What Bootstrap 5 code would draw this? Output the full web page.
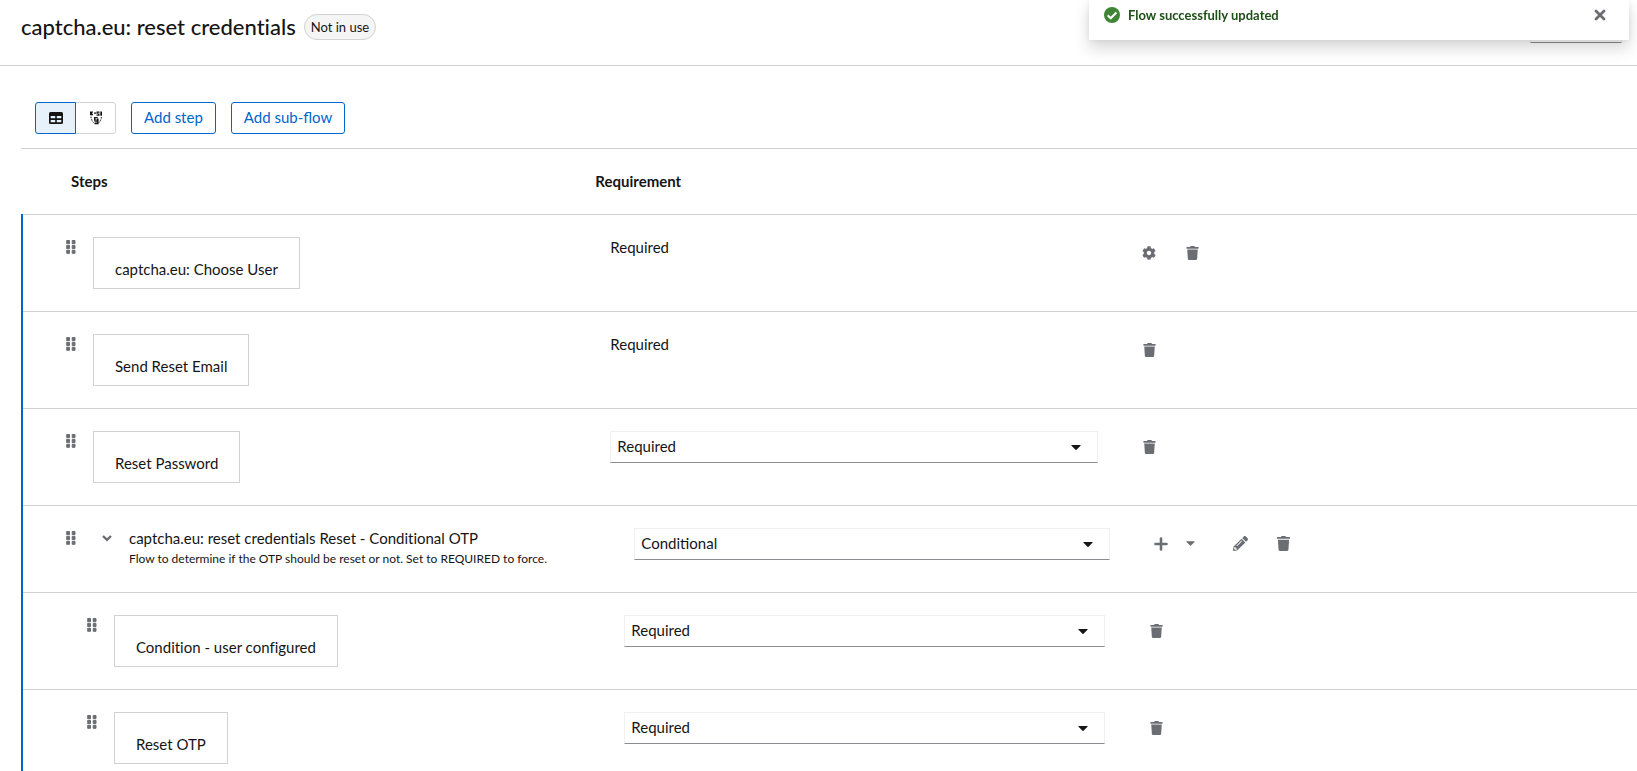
<!DOCTYPE html>
<html lang="en">
<head>
<meta charset="utf-8">
<meta name="viewport" content="width=device-width, initial-scale=1">
<title>Authentication flow</title>
<link href="https://cdn.jsdelivr.net/npm/bootstrap@5.3.0/dist/css/bootstrap.min.css" rel="stylesheet">
<style>
  :root { --ink: #151515; --muted: #6a6e73; --line: #d2d2d2; --blue: #06c; }
  body { font: 400 15px/22px Lato, "Open Sans", sans-serif; font-variant-ligatures: none; color: var(--ink); background: #fff; overflow-x: hidden; }
  svg { display: block; fill: currentColor; }

  .page-head { height: 66px; padding: 0 15px 12px 21px; border-bottom: 1px solid var(--line); }
  .page-head h1 { font-size: 22px; line-height: 28px; font-weight: 500; }
  .flow-label { font-size: 13px; line-height: 24px; border: 1px solid var(--line); background: #f5f5f5; padding: 0 6px; border-radius: 13px; }
  .action-toggle { width: 92px; height: 32px; border: 1px solid #f0f0f0; border-bottom-color: #8a8d90; background-color: #fff; padding: 0 6px; }

  .flow-toast { position: fixed; top: 0; right: 8px; width: 540px; max-width: 100%; z-index: 10; background: #fff; padding: 4px 22px 14px 15px;
    box-shadow: 0 8px 16px rgba(3,3,3,.16), 0 0 6px rgba(3,3,3,.08); }
  .flow-toast p { font-size: 13px; font-weight: 700; color: #1e4f18; }
  .plain { border: 0; background: none; padding: 0; color: var(--muted); display: flex; align-items: center; justify-content: center; }

  .flow-tools { margin-left: 21px; padding: 36px 14px 14px; border-bottom: 1px solid var(--line); gap: 15px; }
  .view-toggle .btn, .btn-flow { height: 32px; border-radius: 3px; font-size: 15px; line-height: 22px; }
  .view-toggle .btn { width: 41px; padding: 0; display: flex; align-items: center; justify-content: center; border-color: var(--line); color: var(--ink); }
  .view-toggle .btn:first-child { border-color: var(--blue); background: #e7f1fa; z-index: 1; }
  .btn-flow { border-color: var(--blue); color: var(--blue); padding: 0 12px 2px; }

  .flow-grid { display: grid; grid-template-columns: repeat(3, minmax(0, 1fr)); column-gap: 30px; flex: 1 1 0; min-width: 0; }
  .flow-head { margin-left: 21px; padding: 21px 23px 22px 50px; font-weight: 700; }
  .flow-list { margin: 0 0 0 21px; padding: 0; list-style: none; border-left: 2px solid var(--blue); }
  .flow-row { display: flex; border-top: 1px solid var(--line); padding: 22px 22px 22px 43px; }
  .flow-row.nested { padding-left: 64px; }
  .drag { width: 27px; height: 20px; justify-content: flex-start; flex: none; }
  .fold { width: 36px; height: 20px; flex: none; }
  .fold svg { margin-right: 8px; }
  .step-box { border: 1px solid var(--line); padding: 20px 21px 8px; width: fit-content; max-width: 100%; }
  .step-text { line-height: 20px; }
  .step-note { font-size: 12px; line-height: 22px; }
  .need { appearance: none; width: 100%; height: 32px; border: 1px solid #f0f0f0; border-bottom-color: #8a8d90; border-radius: 0; padding: 0 36px 2px 6px; color: var(--ink);
    background: #fff url("data:image/svg+xml,%3Csvg xmlns='http://www.w3.org/2000/svg' viewBox='0 0 10 5'%3E%3Cpath d='M.8 0h8.4q.8.2.3.8L5.5 4.7q-.5.5-1 0L.5.8Q0 .2.8 0' fill='%23151515'/%3E%3C/svg%3E") no-repeat right 16px center / 10px 5px; }
  .tool { width: 43px; height: 31px; }
  .tool-caret { width: 15px; height: 31px; margin-right: 21px; }
</style>
</head>
<body>
<svg class="d-none" aria-hidden="true">
  <symbol id="i-drag" viewBox="0 0 10 14"><path d="M.7.5h2.800v3.200H.7zM6.200.5H9v3.200H6.200zM.7 5.400h2.800v3.200H.7zM6.200 5.400H9v3.200H6.200zM.7 10.300h2.800v3H.7zM6.200 10.300H9v3H6.200z" stroke="currentColor" stroke-width="1" stroke-linejoin="round"/></symbol>
  <symbol id="i-trash" viewBox="0 0 448 512"><path d="M432 32H312l-9.400-18.700A24 24 0 0 0 281.100 0H166.800a23.720 23.720 0 0 0-21.400 13.300L136 32H16A16 16 0 0 0 0 48v32a16 16 0 0 0 16 16h416a16 16 0 0 0 16-16V48a16 16 0 0 0-16-16zM53.200 467a48 48 0 0 0 47.900 45h245.800a48 48 0 0 0 47.900-45L416 128H32z"/></symbol>
  <symbol id="i-gear" viewBox="0 0 512 512"><path d="M487.4 315.7l-42.6-24.6c4.3-23.2 4.3-47 0-70.2l42.6-24.6c4.900-2.800 7.100-8.600 5.500-14-11.100-35.600-30-67.800-54.700-94.600-3.800-4.100-10-5.100-14.800-2.300L380.800 110c-17.900-15.400-38.500-27.300-60.800-35.100V25.800c0-5.600-3.900-10.500-9.400-11.700-36.700-8.200-74.300-7.800-109.200 0-5.500 1.200-9.400 6.100-9.400 11.700V75c-22.200 7.900-42.800 19.800-60.800 35.100L88.700 85.500c-4.900-2.800-11-1.900-14.800 2.300-24.700 26.700-43.600 58.900-54.700 94.600-1.700 5.400.6 11.200 5.500 14L67.300 221c-4.300 23.200-4.300 47 0 70.200l-42.600 24.600c-4.900 2.800-7.100 8.600-5.500 14 11.100 35.600 30 67.800 54.700 94.600 3.800 4.100 10 5.100 14.800 2.300l42.600-24.600c17.900 15.400 38.500 27.300 60.800 35.100v49.200c0 5.600 3.900 10.500 9.400 11.700 36.700 8.200 74.300 7.800 109.200 0 5.500-1.200 9.400-6.100 9.400-11.700v-49.200c22.200-7.900 42.800-19.800 60.800-35.100l42.600 24.600c4.900 2.800 11 1.900 14.800-2.300 24.700-26.700 43.600-58.900 54.700-94.600 1.500-5.500-.7-11.300-5.600-14.100zM256 336c-44.100 0-80-35.900-80-80s35.900-80 80-80 80 35.900 80 80-35.900 80-80 80z"/></symbol>
  <symbol id="i-pencil" viewBox="0 0 512 512"><path d="M497.900 142.100l-46.100 46.100c-4.700 4.700-12.300 4.700-17 0l-111-111c-4.700-4.700-4.700-12.300 0-17l46.100-46.100c18.700-18.700 49.100-18.700 67.900 0l60.100 60.100c18.800 18.700 18.800 49.100 0 67.900zM284.200 99.800L21.600 362.400.4 483.900c-2.900 16.400 11.400 30.600 27.800 27.800l121.500-21.300 262.600-262.600c4.700-4.700 4.700-12.300 0-17l-111-111c-4.800-4.700-12.400-4.700-17.100 0zM124.100 339.900c-5.500-5.500-5.500-14.300 0-19.800l154-154c5.500-5.500 14.300-5.500 19.800 0s5.500 14.300 0 19.800l-154 154c-5.500 5.500-14.300 5.500-19.800 0zM88 424h48v36.300l-64.500 11.300-31.100-31.100L51.700 376H88v48z"/></symbol>
</svg>

<div class="flow-toast d-flex align-items-center" role="status">
  <svg class="me-2" width="16" height="16" viewBox="0 0 16 16" aria-hidden="true"><circle cx="8" cy="8" r="8" fill="#3e8635"/><path d="M3.700 8.300l3 3 5.700-5.900" fill="none" stroke="#fff" stroke-width="2.200"/></svg>
  <p class="mb-0 flex-grow-1">Flow successfully updated</p>
  <button class="plain" type="button" aria-label="Close"><svg width="14" height="14" viewBox="0 0 14 14"><path d="M3 3l8 8M11 3l-8 8" stroke="currentColor" stroke-width="2.800" stroke-linecap="round"/></svg></button>
</div>

<header class="page-head d-flex align-items-center">
  <h1 class="mb-0">captcha.eu: reset credentials</h1>
  <span class="flow-label ms-2">Not in use</span>
  <button class="action-toggle ms-auto" type="button" aria-label="Actions"></button>
</header>

<main>
  <div class="flow-tools d-flex">
    <div class="btn-group view-toggle" role="group" aria-label="View">
      <button class="btn" type="button" aria-label="Table view"><svg width="14" height="14" viewBox="0 0 14 14"><path fill-rule="evenodd" d="M1.500 1h11Q14 1 14 2.500v9q0 1.500-1.500 1.500h-11Q0 13 0 11.500v-9Q0 1 1.500 1zM1.700 5v2.300h4.500V5zM7.800 5v2.300h4.500V5zM1.700 9v2.300h4.500V9zM7.800 9v2.300h4.500V9z"/></svg></button>
      <button class="btn" type="button" aria-label="Diagram view"><svg width="14" height="14" viewBox="0 0 14 14"><path fill-rule="evenodd" d="M1 .5h3v1.300H3v1h1v1.400H1zM5 1.500h2v1.300H5zM7.500.5h3v1.200H9v.8h1.500v2.300h-3V3.600H9v-.8H7.500zM11.300.5H13v4.300h-1.700zM5 6h3.700v1.200H6.400v1.300H8v1.200H5zM5.500 10.300H8V7.500h1.600v5.800H5.500v-1.200H8v-.7H5.500z"/><path d="M2 5.700v1.500M2.500 8.200l.7 1.500M3.600 10.700l1 1M12.300 6v1.500M11.800 8.500l-.6 1.300M11 10.500l-.8 1" fill="none" stroke="currentColor" stroke-width="1"/></svg></button>
    </div>
    <button class="btn btn-flow" type="button">Add step</button>
    <button class="btn btn-flow" type="button">Add sub-flow</button>
  </div>

  <div class="flow-head"><div class="flow-grid"><div>Steps</div><div>Requirement</div></div></div>

  <ul class="flow-list">
    <li class="flow-row">
      <button class="plain drag" type="button" aria-label="Drag step"><svg width="10" height="14"><use href="#i-drag"/></svg></button>
      <div class="flow-grid">
        <div><div class="step-box">captcha.eu: Choose User</div></div>
        <div class="step-text">Required</div>
        <div class="d-flex">
          <button class="plain tool" type="button" aria-label="Settings"><svg width="14" height="14"><use href="#i-gear"/></svg></button>
          <button class="plain tool" type="button" aria-label="Delete"><svg width="13" height="14"><use href="#i-trash"/></svg></button>
        </div>
      </div>
    </li>
    <li class="flow-row">
      <button class="plain drag" type="button" aria-label="Drag step"><svg width="10" height="14"><use href="#i-drag"/></svg></button>
      <div class="flow-grid">
        <div><div class="step-box">Send Reset Email</div></div>
        <div class="step-text">Required</div>
        <div class="d-flex"><button class="plain tool" type="button" aria-label="Delete"><svg width="13" height="14"><use href="#i-trash"/></svg></button></div>
      </div>
    </li>
    <li class="flow-row">
      <button class="plain drag" type="button" aria-label="Drag step"><svg width="10" height="14"><use href="#i-drag"/></svg></button>
      <div class="flow-grid">
        <div><div class="step-box">Reset Password</div></div>
        <div><select class="need" aria-label="Requirement of Reset Password"><option>Required</option><option>Disabled</option></select></div>
        <div class="d-flex"><button class="plain tool" type="button" aria-label="Delete"><svg width="13" height="14"><use href="#i-trash"/></svg></button></div>
      </div>
    </li>
    <li class="flow-row">
      <button class="plain drag" type="button" aria-label="Drag sub-flow"><svg width="10" height="14"><use href="#i-drag"/></svg></button>
      <button class="plain fold" type="button" aria-label="Collapse" aria-expanded="true"><svg width="10" height="10" viewBox="0 0 10 10"><path d="M1 3l4 3.800L9 3" fill="none" stroke="currentColor" stroke-width="2.400"/></svg></button>
      <div class="flow-grid">
        <div class="step-text">captcha.eu: reset credentials Reset - Conditional OTP<div class="step-note">Flow to determine if the OTP should be reset or not. Set to REQUIRED to force.</div></div>
        <div><select class="need" aria-label="Requirement of the sub-flow"><option>Conditional</option><option>Required</option></select></div>
        <div class="d-flex">
          <button class="plain tool" type="button" aria-label="Add"><svg width="14" height="14" viewBox="0 0 14 14"><path d="M7 1.500v11M1.500 7h11" stroke="currentColor" stroke-width="2.600" stroke-linecap="round"/></svg></button>
          <button class="plain tool-caret" type="button" aria-label="More"><svg width="9" height="5" viewBox="0 0 10 5"><path d="M.8 0h8.400q.8.200.3.800L5.500 4.700q-.5.500-1 0L.5.800Q0 .2.8 0"/></svg></button>
          <button class="plain tool" type="button" aria-label="Edit"><svg width="15" height="15"><use href="#i-pencil"/></svg></button>
          <button class="plain tool" type="button" aria-label="Delete"><svg width="13" height="15"><use href="#i-trash"/></svg></button>
        </div>
      </div>
    </li>
    <li class="flow-row nested">
      <button class="plain drag" type="button" aria-label="Drag step"><svg width="10" height="14"><use href="#i-drag"/></svg></button>
      <div class="flow-grid">
        <div><div class="step-box">Condition - user configured</div></div>
        <div><select class="need" aria-label="Requirement of Condition - user configured"><option>Required</option><option>Disabled</option></select></div>
        <div class="d-flex"><button class="plain tool" type="button" aria-label="Delete"><svg width="13" height="14"><use href="#i-trash"/></svg></button></div>
      </div>
    </li>
    <li class="flow-row nested">
      <button class="plain drag" type="button" aria-label="Drag step"><svg width="10" height="14"><use href="#i-drag"/></svg></button>
      <div class="flow-grid">
        <div><div class="step-box">Reset OTP</div></div>
        <div><select class="need" aria-label="Requirement of Reset OTP"><option>Required</option><option>Disabled</option></select></div>
        <div class="d-flex"><button class="plain tool" type="button" aria-label="Delete"><svg width="13" height="14"><use href="#i-trash"/></svg></button></div>
      </div>
    </li>
  </ul>
</main>
<script src="https://cdn.jsdelivr.net/npm/bootstrap@5.3.0/dist/js/bootstrap.bundle.min.js"></script>
</body>
</html>
